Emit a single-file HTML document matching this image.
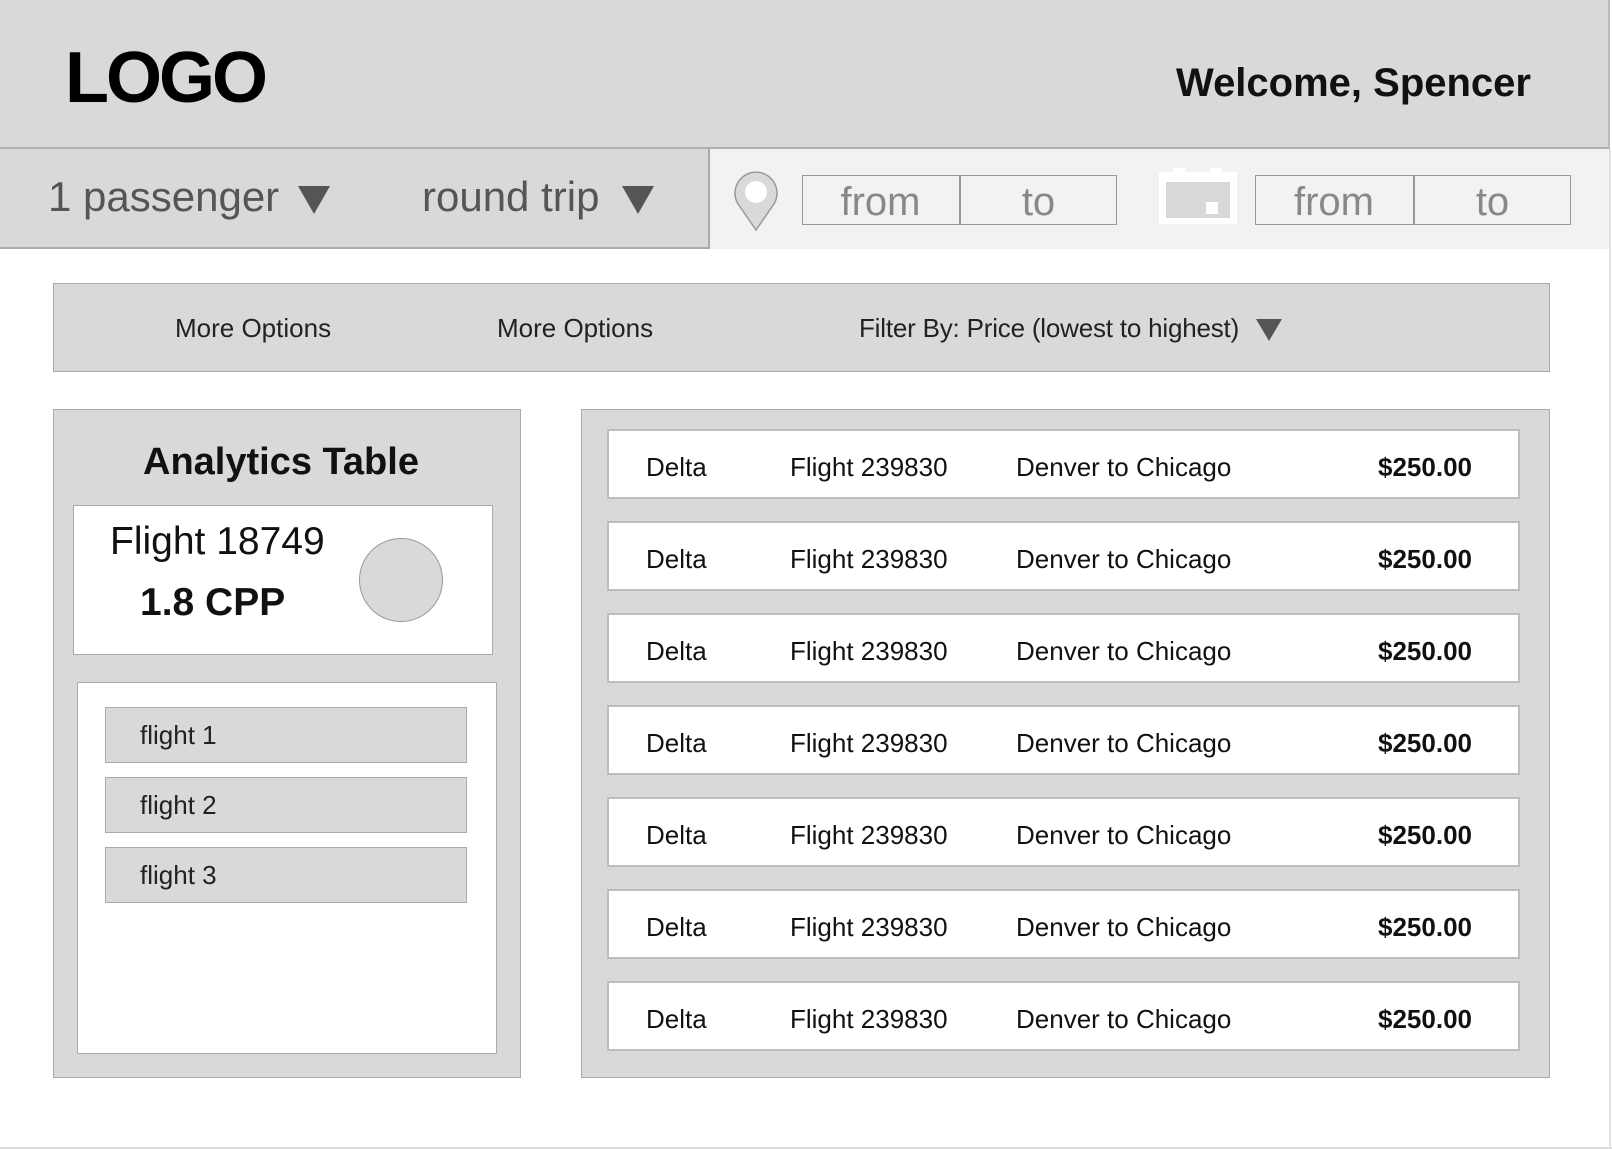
<!DOCTYPE html>
<html><head><meta charset="utf-8"><style>
*{margin:0;padding:0;box-sizing:border-box}
body{width:1612px;height:1150px;position:relative;background:#fff;font-family:"Liberation Sans",Arial,sans-serif;overflow:hidden}
.a{position:absolute}
.t{position:absolute;white-space:nowrap}
.tri{position:absolute;width:0;height:0;border-left:16px solid transparent;border-right:16px solid transparent;border-top:28px solid #555}
.row{position:absolute;left:607px;width:913px;height:70px;background:#fff;border:2px solid #bdbdbd}
.row div{position:absolute;top:3px;line-height:66px;font-size:26px;color:#111}
.fi{position:absolute;left:105px;width:362px;height:56px;background:#d9d9d9;border:1.5px solid #aaa;font-size:26px;line-height:55px;padding-left:34px;color:#222}
</style></head><body>
<div class="a" style="left:0;top:0;width:1610px;height:149px;background:#d9d9d9;border-right:2px solid #bbb;border-bottom:2px solid #b0b0b0"></div>
<div class="t" style="left:65px;top:38px;font-size:72px;line-height:80px;font-weight:bold;letter-spacing:-3px;color:#000">LOGO</div>
<div class="t" style="right:81px;top:58px;font-size:40px;line-height:50px;font-weight:bold;color:#111">Welcome, Spencer</div>
<div class="a" style="left:0;top:149px;width:710px;height:100px;background:#d9d9d9;border-right:2px solid #aaa;border-bottom:2px solid #aaa"></div>
<div class="a" style="left:710px;top:149px;width:900px;height:100px;background:#f2f2f2"></div>
<div class="t" style="left:48px;top:173px;font-size:42px;line-height:48px;color:#555">1 passenger</div>
<div class="tri" style="left:298px;top:186px"></div>
<div class="t" style="left:422px;top:173px;font-size:42px;line-height:48px;color:#555">round trip</div>
<div class="tri" style="left:622px;top:186px"></div>
<svg class="a" style="left:730px;top:168px" width="52" height="64" viewBox="0 0 52 64"><path d="M26 62 L8 36 A21 21 0 1 1 44 36 Z" fill="#d9d9d9" stroke="#999" stroke-width="1.5"/><circle cx="26" cy="24" r="11" fill="#fff"/></svg>
<div class="a" style="left:802px;top:175px;width:315px;height:50px;border:1.5px solid #999;background:#f2f2f2"></div>
<div class="a" style="left:959px;top:175px;width:1.5px;height:50px;background:#999"></div>
<div class="t" style="left:802px;width:157px;text-align:center;top:178px;font-size:40px;line-height:48px;color:#888">from</div>
<div class="t" style="left:960px;width:157px;text-align:center;top:178px;font-size:40px;line-height:48px;color:#888">to</div>
<div class="a" style="left:1159px;top:172px;width:78px;height:52px;background:#fff"></div>
<div class="a" style="left:1166px;top:182px;width:64px;height:36px;background:#d9d9d9"></div>
<div class="a" style="left:1173px;top:168px;width:12px;height:6px;background:#fff"></div>
<div class="a" style="left:1210px;top:168px;width:12px;height:6px;background:#fff"></div>
<div class="a" style="left:1206px;top:202px;width:12px;height:12px;background:#fff"></div>
<div class="a" style="left:1255px;top:175px;width:316px;height:50px;border:1.5px solid #999;background:#f2f2f2"></div>
<div class="a" style="left:1413px;top:175px;width:1.5px;height:50px;background:#999"></div>
<div class="t" style="left:1255px;width:158px;text-align:center;top:178px;font-size:40px;line-height:48px;color:#888">from</div>
<div class="t" style="left:1414px;width:157px;text-align:center;top:178px;font-size:40px;line-height:48px;color:#888">to</div>

<div class="a" style="left:53px;top:283px;width:1497px;height:89px;background:#d9d9d9;border:1.5px solid #aaa"></div>
<div class="t" style="left:175px;top:312px;font-size:26px;line-height:32px;color:#222">More Options</div>
<div class="t" style="left:497px;top:312px;font-size:26px;line-height:32px;color:#222">More Options</div>
<div class="t" style="left:859px;top:312px;font-size:26px;line-height:32px;color:#222;letter-spacing:-0.2px">Filter By: Price (lowest to highest)</div>
<div class="tri" style="left:1256px;top:319px;border-left-width:13px;border-right-width:13px;border-top-width:22px"></div>

<div class="a" style="left:53px;top:409px;width:468px;height:669px;background:#d9d9d9;border:1.5px solid #aaa"></div>
<div class="t" style="left:53px;width:456px;text-align:center;top:438px;font-size:38px;line-height:48px;font-weight:bold;color:#111">Analytics Table</div>
<div class="a" style="left:73px;top:505px;width:420px;height:150px;background:#fff;border:1.5px solid #aaa"></div>
<div class="t" style="left:110px;top:518px;font-size:39px;line-height:48px;color:#111">Flight 18749</div>
<div class="t" style="left:140px;top:579px;font-size:39px;line-height:48px;font-weight:bold;color:#111">1.8 CPP</div>
<div class="a" style="left:359px;top:538px;width:84px;height:84px;border-radius:50%;background:#d9d9d9;border:1.5px solid #999"></div>
<div class="a" style="left:77px;top:682px;width:420px;height:372px;background:#fff;border:1.5px solid #aaa"></div>
<div class="fi" style="top:707px">flight 1</div>
<div class="fi" style="top:777px">flight 2</div>
<div class="fi" style="top:847px">flight 3</div>

<div class="a" style="left:581px;top:409px;width:969px;height:669px;background:#d9d9d9;border:1.5px solid #aaa"></div>
<div class="row" style="top:429px"><div style="left:37px">Delta</div><div style="left:181px">Flight 239830</div><div style="left:407px">Denver to Chicago</div><div style="right:46px;font-weight:bold">$250.00</div></div>
<div class="row" style="top:521px"><div style="left:37px">Delta</div><div style="left:181px">Flight 239830</div><div style="left:407px">Denver to Chicago</div><div style="right:46px;font-weight:bold">$250.00</div></div>
<div class="row" style="top:613px"><div style="left:37px">Delta</div><div style="left:181px">Flight 239830</div><div style="left:407px">Denver to Chicago</div><div style="right:46px;font-weight:bold">$250.00</div></div>
<div class="row" style="top:705px"><div style="left:37px">Delta</div><div style="left:181px">Flight 239830</div><div style="left:407px">Denver to Chicago</div><div style="right:46px;font-weight:bold">$250.00</div></div>
<div class="row" style="top:797px"><div style="left:37px">Delta</div><div style="left:181px">Flight 239830</div><div style="left:407px">Denver to Chicago</div><div style="right:46px;font-weight:bold">$250.00</div></div>
<div class="row" style="top:889px"><div style="left:37px">Delta</div><div style="left:181px">Flight 239830</div><div style="left:407px">Denver to Chicago</div><div style="right:46px;font-weight:bold">$250.00</div></div>
<div class="row" style="top:981px"><div style="left:37px">Delta</div><div style="left:181px">Flight 239830</div><div style="left:407px">Denver to Chicago</div><div style="right:46px;font-weight:bold">$250.00</div></div>

<div class="a" style="left:0;top:1147px;width:1612px;height:2px;background:#ddd"></div>
<div class="a" style="left:1609px;top:149px;width:2px;height:1000px;background:#e2e2e2"></div>
</body></html>
